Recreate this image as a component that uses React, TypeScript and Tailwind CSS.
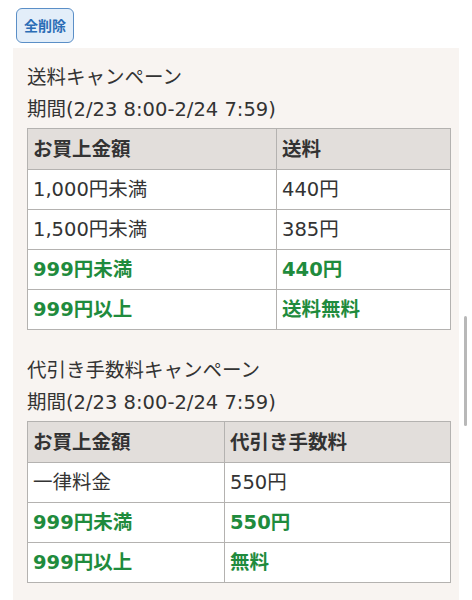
import React from "react";

type Row = { label: string; value: string; green?: boolean };

const font = { fontFamily: '"DejaVu Sans", "Noto Sans CJK JP", sans-serif' };

const CampaignTable = ({ head, rows, firstCol }: { head: [string, string]; rows: Row[]; firstCol: string }) => (
  <table className="w-[424px] border-collapse text-[19.5px] text-[#333]">
    <colgroup>
      <col className={firstCol} />
      <col />
    </colgroup>
    <thead>
      <tr className="h-[41px] bg-[#e2dedb]">
        <th className="border border-[#b4b2b0] px-[5px] pt-px text-left font-bold">{head[0]}</th>
        <th className="border border-[#b4b2b0] px-[5px] pt-px text-left font-bold">{head[1]}</th>
      </tr>
    </thead>
    <tbody>
      {rows.map((r, i) => (
        <tr key={i} className="h-10 bg-white">
          <td className={`border border-[#b4b2b0] px-[5px] pt-px ${r.green ? "font-bold text-[#1f8b3d]" : ""}`}>{r.label}</td>
          <td className={`border border-[#b4b2b0] px-[5px] pt-px ${r.green ? "font-bold text-[#1f8b3d]" : ""}`}>{r.value}</td>
        </tr>
      ))}
    </tbody>
  </table>
);

export default function App() {
  return (
    <div className="relative h-[600px] w-[472px] overflow-hidden bg-white" style={font}>
      <div className="px-4 pt-2">
        <button className="h-[35px] rounded-md border border-[#5b8fc7] bg-[#e3eef9] px-[7px] text-[14px] font-bold text-[#2b6db6]" style={{ fontFamily: '"Noto Sans CJK JP", sans-serif' }}>
          全削除
        </button>
      </div>
      <div className="ml-[13px] mt-[5px] w-[446px] bg-[#f8f4f1] pb-6 pl-[14px] pr-2 pt-[14px]">
        <div className="text-[19.5px] leading-[32px] text-[#333]">
          <p>送料キャンペーン</p>
          <p>期間(2/23 8:00-2/24 7:59)</p>
        </div>
        <div className="mt-[2px]">
          <CampaignTable
            head={["お買上金額", "送料"]}
            firstCol="w-[249px]"
            rows={[
              { label: "1,000円未満", value: "440円" },
              { label: "1,500円未満", value: "385円" },
              { label: "999円未満", value: "440円", green: true },
              { label: "999円以上", value: "送料無料", green: true },
            ]}
          />
        </div>
        <div className="mt-[25px] text-[19.5px] leading-[32px] text-[#333]">
          <p>代引き手数料キャンペーン</p>
          <p>期間(2/23 8:00-2/24 7:59)</p>
        </div>
        <div className="mt-[2px]">
          <CampaignTable
            head={["お買上金額", "代引き手数料"]}
            firstCol="w-[197px]"
            rows={[
              { label: "一律料金", value: "550円" },
              { label: "999円未満", value: "550円", green: true },
              { label: "999円以上", value: "無料", green: true },
            ]}
          />
        </div>
      </div>
      <div className="absolute left-[464px] top-[316px] h-[110px] w-[3px] rounded-full bg-[#b8b8b8]" />
    </div>
  );
}
